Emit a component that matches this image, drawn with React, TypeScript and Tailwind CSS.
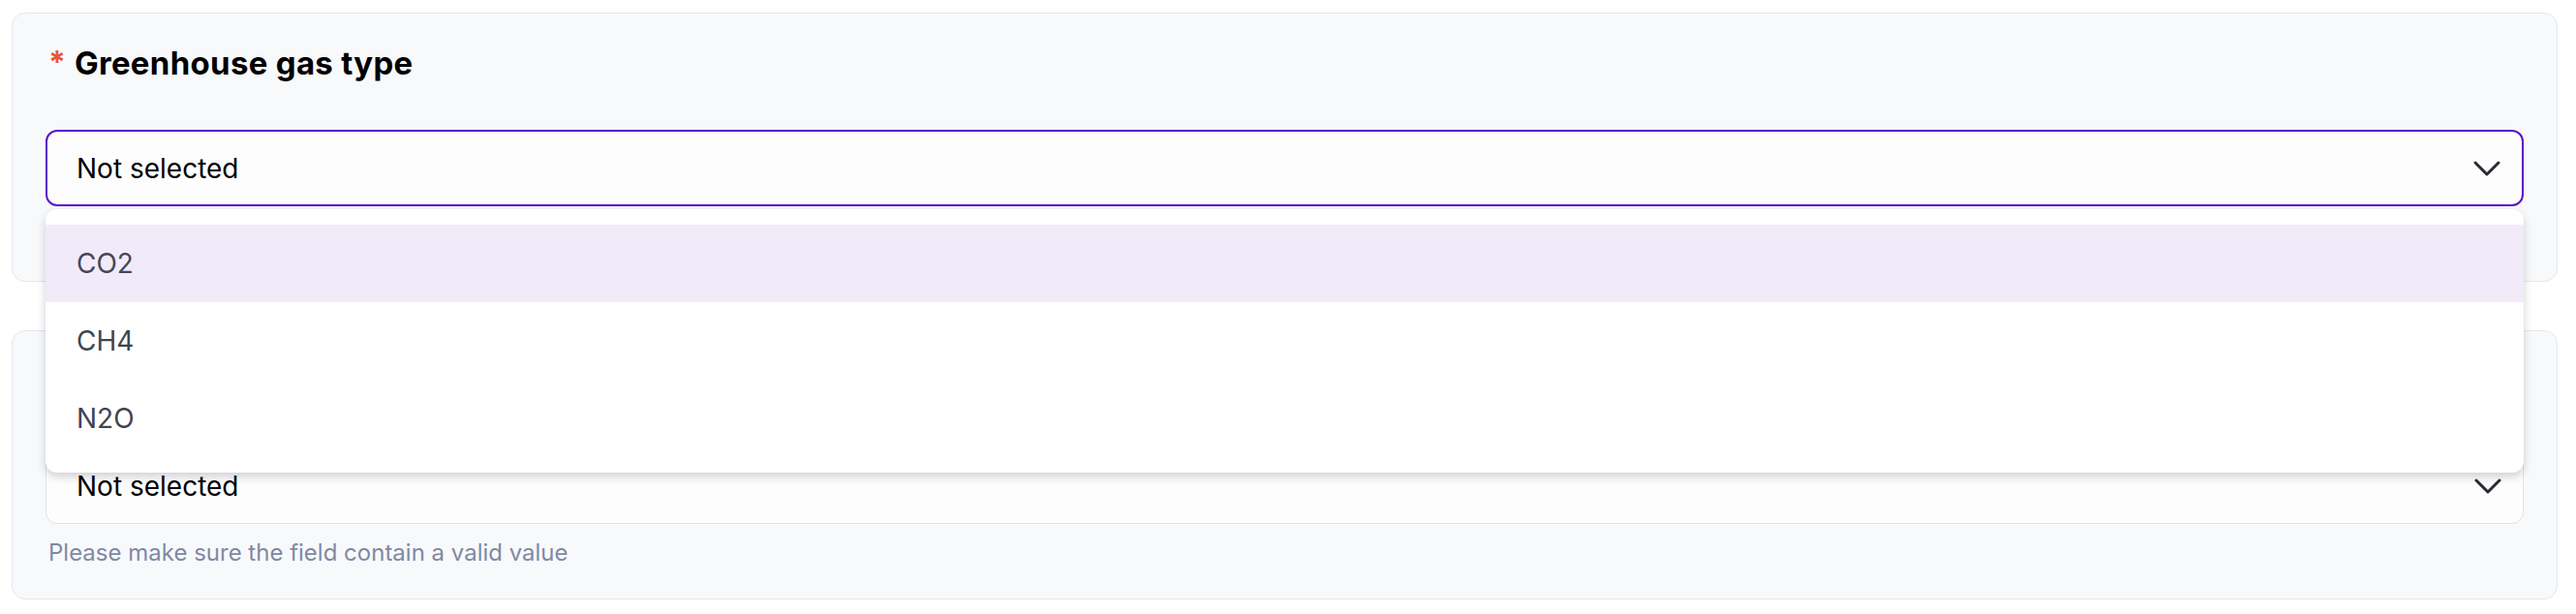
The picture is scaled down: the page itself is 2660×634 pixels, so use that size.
import { ChevronDown } from 'lucide-react';

const GAS_OPTIONS = ['CO2', 'CH4', 'N2O'];

type FieldProps = {
  label: string;
  open?: boolean;
  hint?: string;
};

function SelectField({ label, open = false, hint }: FieldProps) {
  return (
    <div className="h-[278px] rounded-[14px] border border-[#e3e7ef] bg-[#f8f9fb] px-[34px] pt-[27px]">
      <div className="flex h-[48px] items-center leading-[48px]">
        <span className="ml-[3px] mr-[9px] text-[32px] font-bold text-[#e8553d]">*</span>
        <span className="text-[33px] font-bold tracking-[0.3px] text-black">{label}</span>
      </div>

      <div className={`relative mt-[45px] ${open ? 'z-20' : 'z-0'}`}>
        <div
          className={`flex h-[79px] items-center justify-between rounded-[12px] bg-[#fdfdfd] pr-[12px] ${
            open ? 'border-2 border-[#5916c8] pl-[30px]' : 'border border-[#dfe3eb] pl-[31px]'
          }`}
        >
          <span className="text-[28px] leading-none text-black">Not selected</span>
          <ChevronDown size={48} strokeWidth={1.5} className="text-[#2a2a33]" />
        </div>

        {open && (
          <ul className="absolute left-0 right-0 top-[82px] rounded-[12px] bg-white py-[16px] shadow-[0_4px_10px_rgba(20,24,40,0.2)]">
            {GAS_OPTIONS.map((option, index) => (
              <li
                key={option}
                className={`flex h-[80px] items-center pl-[32px] text-[28px] leading-none ${
                  index === 0 ? 'bg-[#f1ebf9] text-[#464659]' : 'text-[#41444f]'
                }`}
              >
                {option}
              </li>
            ))}
          </ul>
        )}
      </div>

      <p className="mt-[14px] h-[32px] pl-[3px] text-[24px] leading-[32px] text-[#8089a2]">{hint}</p>
    </div>
  );
}

export default function App() {
  return (
    <div className="min-h-[634px] bg-white pl-[12px] pr-[19px] pt-[13px] font-['Inter',sans-serif]">
      <div className="flex flex-col gap-[50px]">
        <SelectField label="Greenhouse gas type" open />
        <SelectField label="Emission unit" hint="Please make sure the field contain a valid value" />
      </div>
    </div>
  );
}
